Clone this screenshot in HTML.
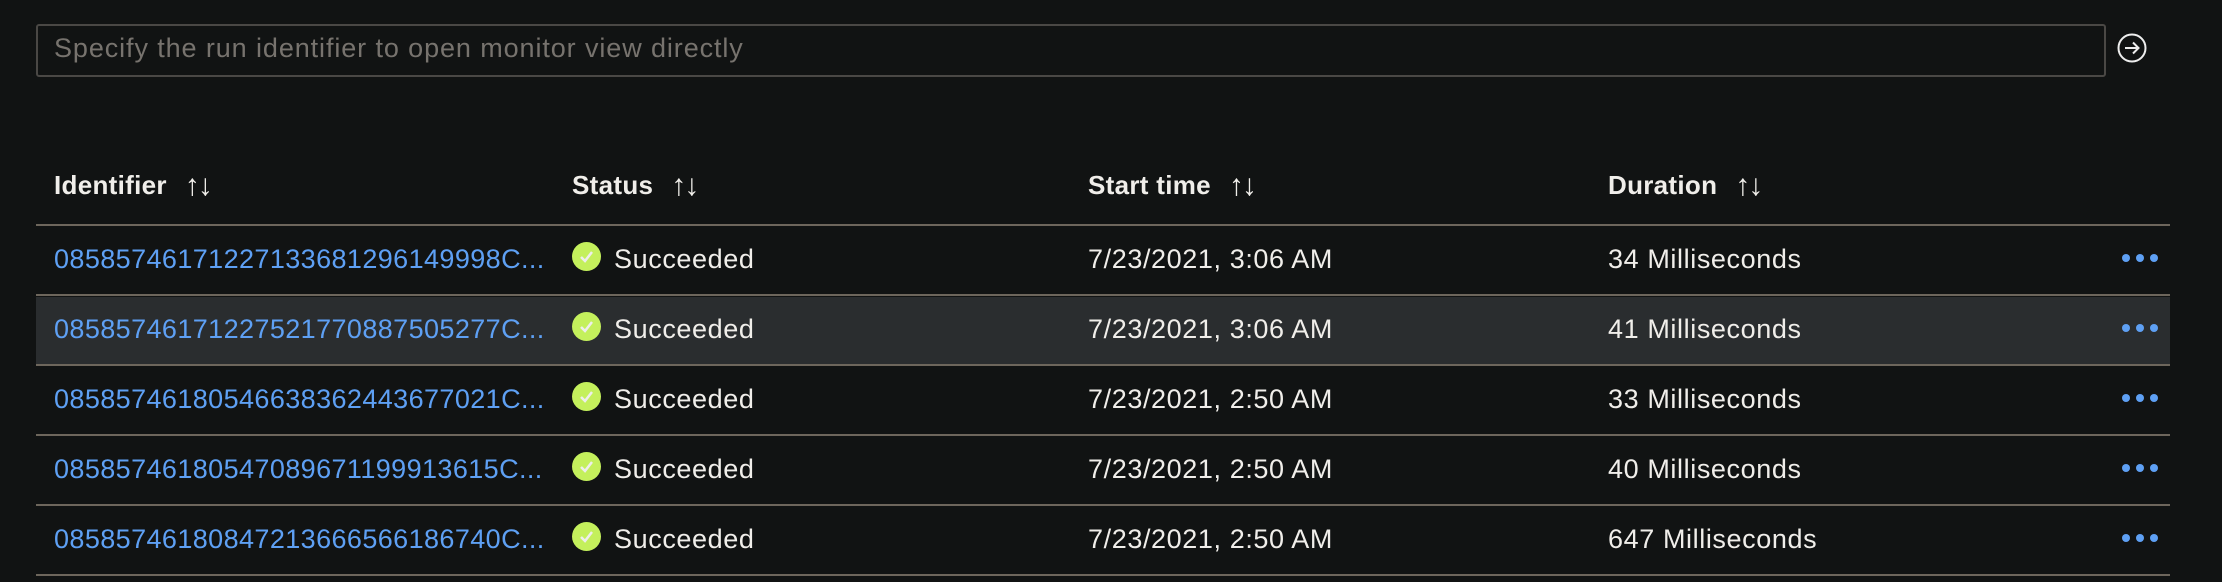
<!DOCTYPE html>
<html><head><style>
body{margin:0;width:2222px;height:582px;background:#111313;font-family:"Liberation Sans",sans-serif;overflow:hidden;position:relative;color:#f0eeea}
.inp{position:absolute;left:36px;top:24px;width:2066px;height:49px;border:2px solid #4a4845;border-radius:3px}
.ph{position:absolute;left:54px;top:33px;font-size:27px;color:#77736e;letter-spacing:0.9px}
.hdr{position:absolute;top:168px;font-size:26px;font-weight:bold;letter-spacing:0.3px}
.ar{font-weight:normal;margin-left:18px;font-size:30px;letter-spacing:-2px;position:relative;top:1px}
.line{position:absolute;left:36px;width:2134px;height:2px;background:#6d665c}
.row{position:absolute;left:36px;width:2134px;height:68px}
.c{position:absolute;font-size:27px;letter-spacing:0.6px}
.id{color:#5ea0f4;letter-spacing:0.4px}
.chk{position:absolute;width:29px;height:29px;border-radius:50%;background:#c4f05c}
.dots{position:absolute;left:2122px;width:36px;height:8px}
.dots i{position:absolute;width:8px;height:8px;border-radius:50%;background:#5ea0f4;top:0}
</style></head><body>
<div class="inp"></div>
<div class="ph">Specify the run identifier to open monitor view directly</div>
<svg style="position:absolute;left:2117px;top:33px" width="30" height="30" viewBox="0 0 30 30"><circle cx="15" cy="15" r="13.5" fill="none" stroke="#eee" stroke-width="2"/><path d="M8 15h13M16 9.5l5.5 5.5-5.5 5.5" fill="none" stroke="#eee" stroke-width="2"/></svg>
<div class="hdr" style="left:54px">Identifier<span class="ar">↑↓</span></div>
<div class="hdr" style="left:572px">Status<span class="ar">↑↓</span></div>
<div class="hdr" style="left:1088px">Start time<span class="ar">↑↓</span></div>
<div class="hdr" style="left:1608px">Duration<span class="ar">↑↓</span></div>
<div class="row" style="top:297px;background:#2a2d2f"></div>
<div class="line" style="top:224px"></div>
<div class="line" style="top:294px"></div>
<div class="line" style="top:364px"></div>
<div class="line" style="top:434px"></div>
<div class="line" style="top:504px"></div>
<div class="line" style="top:574px"></div>
<div class="c id" style="left:54px;top:244px">08585746171227133681296149998C...</div>
<div class="c id" style="left:54px;top:314px">08585746171227521770887505277C...</div>
<div class="c id" style="left:54px;top:384px">08585746180546638362443677021C...</div>
<div class="c id" style="left:54px;top:454px">08585746180547089671199913615C...</div>
<div class="c id" style="left:54px;top:524px">08585746180847213666566186740C...</div>
<div class="chk" style="left:572px;top:242px"></div>
<div class="chk" style="left:572px;top:312px"></div>
<div class="chk" style="left:572px;top:382px"></div>
<div class="chk" style="left:572px;top:452px"></div>
<div class="chk" style="left:572px;top:522px"></div>
<svg style="position:absolute;left:572px;top:242px" width="29" height="310"><g fill="none" stroke="#eee" stroke-width="2.5"><path d="M9 15l4 4 7-9"/><path d="M9 85l4 4 7-9"/><path d="M9 155l4 4 7-9"/><path d="M9 225l4 4 7-9"/><path d="M9 295l4 4 7-9"/></g></svg>
<div class="c" style="left:614px;top:244px">Succeeded</div>
<div class="c" style="left:614px;top:314px">Succeeded</div>
<div class="c" style="left:614px;top:384px">Succeeded</div>
<div class="c" style="left:614px;top:454px">Succeeded</div>
<div class="c" style="left:614px;top:524px">Succeeded</div>
<div class="c" style="left:1088px;top:244px">7/23/2021, 3:06 AM</div>
<div class="c" style="left:1088px;top:314px">7/23/2021, 3:06 AM</div>
<div class="c" style="left:1088px;top:384px">7/23/2021, 2:50 AM</div>
<div class="c" style="left:1088px;top:454px">7/23/2021, 2:50 AM</div>
<div class="c" style="left:1088px;top:524px">7/23/2021, 2:50 AM</div>
<div class="c" style="left:1608px;top:244px">34 Milliseconds</div>
<div class="c" style="left:1608px;top:314px">41 Milliseconds</div>
<div class="c" style="left:1608px;top:384px">33 Milliseconds</div>
<div class="c" style="left:1608px;top:454px">40 Milliseconds</div>
<div class="c" style="left:1608px;top:524px">647 Milliseconds</div>
<div class="dots" style="top:254px"><i style="left:0"></i><i style="left:14px"></i><i style="left:28px"></i></div>
<div class="dots" style="top:324px"><i style="left:0"></i><i style="left:14px"></i><i style="left:28px"></i></div>
<div class="dots" style="top:394px"><i style="left:0"></i><i style="left:14px"></i><i style="left:28px"></i></div>
<div class="dots" style="top:464px"><i style="left:0"></i><i style="left:14px"></i><i style="left:28px"></i></div>
<div class="dots" style="top:534px"><i style="left:0"></i><i style="left:14px"></i><i style="left:28px"></i></div>
</body></html>
